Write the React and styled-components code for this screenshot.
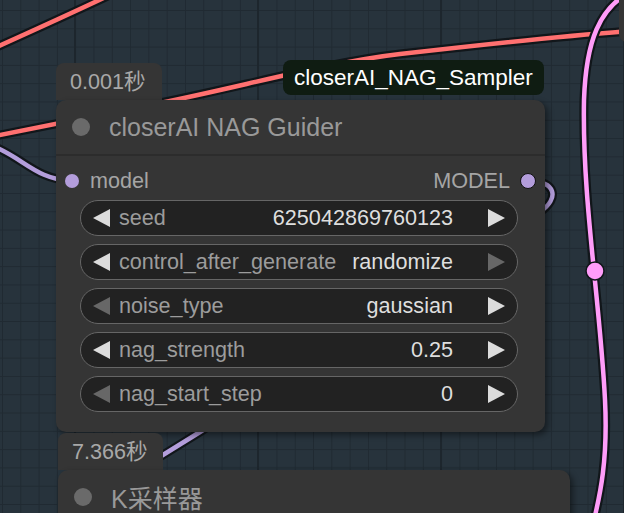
import React from "react";
import styled, { createGlobalStyle } from "styled-components";

const GlobalStyle = createGlobalStyle`
  body {
    margin: 0;
    background: #27333c;
    font-family: "Liberation Sans", "Noto Sans CJK SC", Arial, sans-serif;
  }
`;

const Canvas = styled.div`
  position: relative;
  width: 624px;
  height: 513px;
  overflow: hidden;
  background-color: #27333c;
  background-image:
    linear-gradient(to right, #1d262d 2px, transparent 2px),
    linear-gradient(to right, #202a32 1px, transparent 1px),
    linear-gradient(to bottom, #202a32 1px, transparent 1px);
  background-size: 183px 100%, 18.3px 18.3px, 18.3px 18.3px;
  background-position: 74px 0, 2px 10px, 2px 10px;
`;

const Wires = styled.svg`
  position: absolute;
  inset: 0;
  width: 624px;
  height: 513px;
`;

const NodeGroup = styled.div`
  position: absolute;
  left: ${(p) => p.$x}px;
  top: ${(p) => p.$y}px;
  display: flex;
  flex-direction: column;
  align-items: flex-start;
`;

const Badge = styled.div`
  width: ${(p) => p.$w}px;
  height: 37px;
  box-sizing: border-box;
  padding: 4px 0 0 14px;
  background: #353535;
  border-radius: 8px 8px 0 0;
  color: #a8a8a8;
  font-size: 21.6px;
  line-height: 30px;
`;

const NodeBox = styled.div`
  width: ${(p) => p.$w}px;
  background: #353535;
  border-radius: 10px;
  box-shadow: 3px 3px 6px rgba(0, 0, 0, 0.45);
`;

const Title = styled.div`
  height: 54px;
  display: flex;
  align-items: center;
  gap: 19px;
  padding-left: 16px;
  border-bottom: 2px solid #2c2c2c;
  color: #999;
  font-size: 25px;
`;

const TitleDot = styled.span`
  width: 18px;
  height: 18px;
  border-radius: 50%;
  background: #6a6a6a;
`;

const Body = styled.div`
  display: flex;
  flex-direction: column;
  padding: 7px 0 20px;
`;

const SlotRow = styled.div`
  height: 36px;
  display: flex;
  align-items: center;
  padding: 0 9px;
  color: #a5a5a5;
  font-size: 21.6px;
`;

const Slot = styled.div`
  display: flex;
  align-items: center;
  gap: ${(p) => (p.$out ? 10 : 11)}px;
  margin-left: ${(p) => (p.$out ? "auto" : 0)};
`;

const SlotDot = styled.span`
  width: 14px;
  height: 14px;
  border-radius: 50%;
  background: #b39ddb;
  border: ${(p) => (p.$out ? "1.5px solid #111" : "none")};
`;

const WidgetList = styled.div`
  display: flex;
  flex-direction: column;
  gap: 8px;
  margin-top: 1px;
`;

const Widget = styled.div`
  height: 36px;
  margin: 0 27px 0 24px;
  box-sizing: border-box;
  display: flex;
  align-items: center;
  padding: 0 12px;
  background: #222;
  border: 1.5px solid #666;
  border-radius: 18px;
  font-size: 21.6px;
`;

const Arrow = styled.span`
  width: 0;
  height: 0;
  border-top: 9px solid transparent;
  border-bottom: 9px solid transparent;
  ${(p) => (p.$dir === "left" ? "border-right" : "border-left")}: 17px solid
    ${(p) => (p.$dim ? "#676767" : "#dcdcdc")};
`;

const WLabel = styled.span`
  flex: 1;
  margin-left: 9px;
  color: #9c9c9c;
`;

const WValue = styled.span`
  margin-right: 35px;
  color: #dedede;
`;

const GroupLabel = styled.div`
  position: absolute;
  left: 283px;
  top: 60px;
  height: 35px;
  padding: 0 11px;
  display: flex;
  align-items: center;
  background: #0f1c12;
  border-radius: 8px;
  color: #fff;
  font-size: 22.5px;
`;

const EdgeNode = styled.div`
  position: absolute;
  left: 619px;
  top: -12px;
  width: 40px;
  height: 54px;
  background: #353535;
  border-radius: 8px;
`;

const widgets = [
  { name: "seed", value: "625042869760123" },
  { name: "control_after_generate", value: "randomize", dimRight: true },
  { name: "noise_type", value: "gaussian", dimLeft: true },
  { name: "nag_strength", value: "0.25" },
  { name: "nag_start_step", value: "0", dimLeft: true },
];

const Wire = ({ d, color }) => (
  <g>
    <path d={d} fill="none" stroke="#11161a" strokeWidth="9" />
    <path d={d} fill="none" stroke={color} strokeWidth="4.5" />
  </g>
);

export default function App() {
  return (
    <>
      <GlobalStyle />
      <Canvas>
        <Wires viewBox="0 0 624 513">
          <Wire d="M -10 50 C 30 32, 70 14, 112 -6" color="#ff7070" />
          <Wire
            d="M -10 137 L 160 103 C 240 87, 330 62, 400 54 S 560 36, 630 31"
            color="#ff7070"
          />
          <Wire d="M -10 145 C 22 156, 35 180, 73 181" color="#b39ddb" />
          <Wire
            d="M 528 181 C 556 181, 560 198, 540 212 L 200 432 L 150 463 L 110 488"
            color="#b39ddb"
          />
          <Wire
            d="M 630 -8 C 600 8, 586 40, 584 100 C 582 200, 600 300, 605 400 C 608 460, 600 495, 594 520"
            color="#ff9cf9"
          />
          <circle cx="595" cy="271" r="9" fill="#ff9cf9" stroke="#11161a" strokeWidth="1.5" />
        </Wires>

        <EdgeNode />

        <NodeGroup $x={56} $y={63}>
          <Badge $w={106}>0.001秒</Badge>
          <NodeBox $w={489}>
            <Title>
              <TitleDot />
              closerAI NAG Guider
            </Title>
            <Body>
              <SlotRow>
                <Slot>
                  <SlotDot />
                  model
                </Slot>
                <Slot $out>
                  MODEL
                  <SlotDot $out />
                </Slot>
              </SlotRow>
              <WidgetList>
                {widgets.map((w) => (
                  <Widget key={w.name}>
                    <Arrow $dir="left" $dim={w.dimLeft} />
                    <WLabel>{w.name}</WLabel>
                    <WValue>{w.value}</WValue>
                    <Arrow $dir="right" $dim={w.dimRight} />
                  </Widget>
                ))}
              </WidgetList>
            </Body>
          </NodeBox>
        </NodeGroup>

        <GroupLabel>closerAI_NAG_Sampler</GroupLabel>

        <NodeGroup $x={58} $y={433}>
          <Badge $w={105}>7.366秒</Badge>
          <NodeBox $w={512}>
            <Title>
              <TitleDot />
              K采样器
            </Title>
          </NodeBox>
        </NodeGroup>
      </Canvas>
    </>
  );
}
